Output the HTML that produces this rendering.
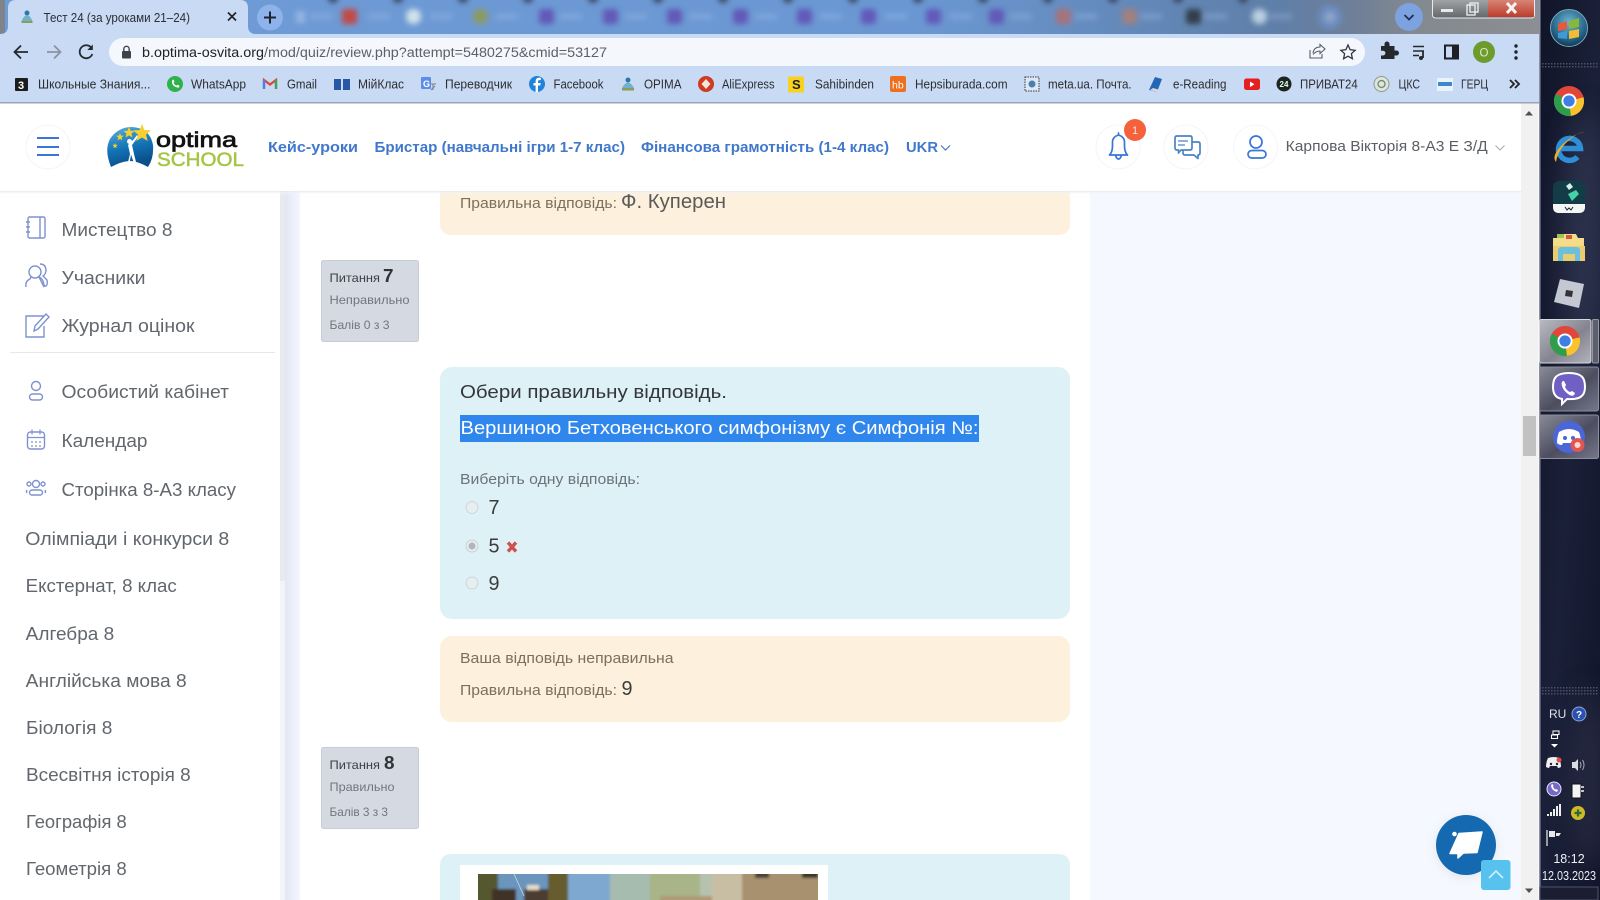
<!DOCTYPE html>
<html lang="uk">
<head>
<meta charset="utf-8">
<title>Тест 24</title>
<style>
html,body{margin:0;padding:0;background:#fff;width:1600px;height:900px;overflow:hidden}
svg{display:block}
text{font-family:"Liberation Sans","DejaVu Sans",sans-serif}
.sb{font-size:18px;fill:#62676d}
.bm{font-size:12.5px;fill:#2c2e32}
.nav{font-size:15px;font-weight:700;fill:#4078cb}
.q{font-size:12px;fill:#72767c}
.qt{font-size:12px;fill:#3c4046}
.qn{font-size:18px;font-weight:700;fill:#30343a}
.m{font-size:18px;fill:#33363a}
.s{font-size:15px;fill:#6c7478}
.f{font-size:15px;fill:#7a715c}
.a{font-size:20px;fill:#3c3c3c}
.ico{fill:none;stroke:#7f92d0;stroke-width:1.4}
.hd{fill:none;stroke:#3a76d6;stroke-width:1.7;stroke-linecap:round;stroke-linejoin:round}
</style>
</head>
<body>
<svg width="1600" height="900" viewBox="0 0 1600 900" xmlns="http://www.w3.org/2000/svg">
<defs>
<filter id="bl" x="-5%" y="-50%" width="110%" height="200%"><feGaussianBlur stdDeviation="3"/></filter>
<filter id="bl2" x="-5%" y="-20%" width="110%" height="140%"><feGaussianBlur stdDeviation="1.2"/></filter>
<filter id="sh" x="-30%" y="-30%" width="160%" height="160%"><feGaussianBlur stdDeviation="5"/></filter>
<filter id="bl3" x="-50%" y="-50%" width="200%" height="200%"><feGaussianBlur stdDeviation="14"/></filter>
<clipPath id="pc"><rect x="478" y="874" width="340" height="26"/></clipPath>
<pattern id="dots" width="3" height="3" patternUnits="userSpaceOnUse"><rect width="1.5" height="1.5" fill="#4a5068"/></pattern>
<linearGradient id="strip" x1="0" x2="1" y1="0" y2="0">
<stop offset="0" stop-color="#6f9bd6"/><stop offset=".6" stop-color="#6a97d2"/><stop offset=".83" stop-color="#5f7fa8"/><stop offset=".88" stop-color="#6f7f98"/><stop offset=".92" stop-color="#84898f"/><stop offset="1" stop-color="#8b8f93"/>
</linearGradient>
<linearGradient id="hsh" x1="0" x2="0" y1="0" y2="1"><stop offset="0" stop-color="#e6e8ee"/><stop offset="1" stop-color="#ffffff" stop-opacity="0"/></linearGradient>
<linearGradient id="left" x1="0" x2="1" y1="0" y2="0"><stop offset="0" stop-color="#e3e6f5"/><stop offset="1" stop-color="#f4f6fd"/></linearGradient>
<linearGradient id="task" x1="0" x2="1" y1="0" y2="1"><stop offset="0" stop-color="#111427"/><stop offset=".5" stop-color="#1a2038"/><stop offset="1" stop-color="#10142a"/></linearGradient>
<linearGradient id="cell" x1="0" x2="1" y1="0" y2="1"><stop offset="0" stop-color="#b9bac2"/><stop offset=".55" stop-color="#83848f"/><stop offset="1" stop-color="#b2b3ba"/></linearGradient>
<linearGradient id="cell2" x1="0" x2="1" y1="0" y2="1"><stop offset="0" stop-color="#8a8b98"/><stop offset=".55" stop-color="#4c4e60"/><stop offset="1" stop-color="#75768a"/></linearGradient>
<linearGradient id="close" x1="0" x2="0" y1="0" y2="1"><stop offset="0" stop-color="#d9887a"/><stop offset="1" stop-color="#bb3d2d"/></linearGradient>
<linearGradient id="win" x1="0" x2="0" y1="0" y2="1"><stop offset="0" stop-color="#a7a9ab"/><stop offset="1" stop-color="#63676b"/></linearGradient>
<radialGradient id="orb" cx=".5" cy=".35" r=".7"><stop offset="0" stop-color="#6db6d4"/><stop offset=".7" stop-color="#215e82"/><stop offset="1" stop-color="#0b2a40"/></radialGradient>
<linearGradient id="lg" x1="0" x2=".3" y1="0" y2="1"><stop offset="0" stop-color="#5ab0e2"/><stop offset=".6" stop-color="#1272b4"/><stop offset="1" stop-color="#0a4f8c"/></linearGradient>
<symbol id="chr" viewBox="-17 -17 34 34" overflow="visible">
<circle r="16" fill="#e0463a"/>
<path d="M0 0L15.5 -4A16 16 0 0 1 2 15.9Z" fill="#f8c32c"/>
<path d="M0 0L2 15.9A16 16 0 0 1 -14 -7.7Z" fill="#2f9e4c"/>
<circle r="8" fill="#fff"/><circle r="6" fill="#3f7fe4"/>
</symbol>
</defs>

<!-- page -->
<rect width="1600" height="900" fill="#fff"/>
<!-- tab strip -->
<rect width="1539" height="34" fill="url(#strip)"/>
<g filter="url(#bl)">
<rect x="296" y="11" width="9" height="12" fill="#a7c1e8" opacity=".7"/>
<rect x="342" y="9" width="15" height="15" rx="2" fill="#c24a45"/>
<rect x="406" y="9" width="15" height="15" rx="7" fill="#d0e2ea"/>
<rect x="473" y="9" width="15" height="15" rx="7" fill="#8d9a5e"/>
<rect x="539" y="9" width="15" height="15" rx="3" fill="#6258b8"/>
<rect x="603" y="9" width="15" height="15" rx="3" fill="#6258b8"/>
<rect x="667" y="9" width="15" height="15" rx="3" fill="#6258b8"/>
<rect x="733" y="9" width="15" height="15" rx="3" fill="#6258b8"/>
<rect x="797" y="9" width="15" height="15" rx="3" fill="#6258b8"/>
<rect x="861" y="9" width="15" height="15" rx="3" fill="#6258b8"/>
<rect x="926" y="9" width="15" height="15" rx="3" fill="#6258b8"/>
<rect x="989" y="9" width="15" height="15" rx="3" fill="#6258b8"/>
<rect x="1056" y="9" width="15" height="15" rx="3" fill="#a8727a"/>
<rect x="1122" y="9" width="15" height="15" rx="3" fill="#a3807e"/>
<rect x="1186" y="9" width="15" height="15" rx="3" fill="#303c4a"/>
<rect x="1252" y="9" width="15" height="15" rx="7" fill="#b9cfe0"/>
<circle cx="1330" cy="17" r="12" fill="#6c8cc0"/><circle cx="1330" cy="17" r="5" fill="#94a8c8"/>
<g fill="#39445e">
<circle cx="333" cy="-2" r="5"/><circle cx="398" cy="-2" r="5"/><circle cx="463" cy="-2" r="5"/><circle cx="528" cy="-2" r="5"/><circle cx="593" cy="-2" r="5"/><circle cx="658" cy="-2" r="5"/><circle cx="723" cy="-2" r="5"/><circle cx="788" cy="-2" r="5"/><circle cx="853" cy="-2" r="5"/><circle cx="918" cy="-2" r="5"/><circle cx="983" cy="-2" r="5"/><circle cx="1048" cy="-2" r="5"/><circle cx="1113" cy="-2" r="5"/><circle cx="1178" cy="-2" r="5"/><circle cx="1243" cy="-2" r="5"/>
</g>
<g fill="#a2bde8" opacity=".4">
<rect x="310" y="14" width="22" height="5"/><rect x="368" y="14" width="22" height="5"/><rect x="430" y="14" width="22" height="5"/><rect x="496" y="14" width="22" height="5"/><rect x="560" y="14" width="22" height="5"/><rect x="625" y="14" width="22" height="5"/><rect x="690" y="14" width="22" height="5"/><rect x="755" y="14" width="22" height="5"/><rect x="820" y="14" width="22" height="5"/><rect x="885" y="14" width="22" height="5"/><rect x="950" y="14" width="22" height="5"/><rect x="1010" y="14" width="22" height="5"/><rect x="1075" y="14" width="22" height="5"/><rect x="1140" y="14" width="22" height="5"/><rect x="1205" y="14" width="22" height="5"/><rect x="1270" y="14" width="22" height="5"/>
</g>
</g>
<rect x="0" y="0" width="5" height="34" fill="#80838a"/>
<!-- active tab -->
<path d="M0 34Q8 34 8 26V8Q8 0 16 0H240Q248 0 248 8V26Q248 34 256 34Z" fill="#c9daf4"/>
<g>
<circle cx="27" cy="13" r="2.500" fill="#2d78a8"/><path d="M21.500 21Q27 9 32.500 21Z" fill="#72b1cc"/><rect x="21.500" y="21" width="11" height="2" fill="#8a9e55"/>
<text x="43.500" y="22" font-size="12.500" fill="#2c2e32" textLength="146.500" lengthAdjust="spacingAndGlyphs">Тест 24 (за уроками 21–24)</text>
<path d="M228 12.500l8 8M236 12.500l-8 8" stroke="#222" stroke-width="1.700"/>
<circle cx="270" cy="17.500" r="13" fill="#8eb2ea"/>
<path d="M264 17.500h12M270 11.500v12" stroke="#1d2430" stroke-width="2"/>
</g>
<circle cx="1409" cy="17" r="14" fill="#7ca3e0"/>
<path d="M1404.500 15l4.500 4.500 4.500-4.500" fill="none" stroke="#1d2f55" stroke-width="1.800"/>
<!-- window controls -->
<g>
<rect x="1432.500" y="-2" width="102" height="20" rx="3" fill="url(#win)" stroke="#e8eaec" stroke-width="1"/>
<rect x="1488" y="-1" width="46" height="18" fill="url(#close)"/>
<rect x="1441" y="9" width="12" height="3" fill="#e8e8e8"/>
<rect x="1467" y="5" width="8" height="10" fill="none" stroke="#f0f0f0" stroke-width="1.300"/>
<rect x="1470" y="3" width="8" height="9" fill="none" stroke="#f0f0f0" stroke-width="1.300"/>
<path d="M1507 3l9 10M1516 3l-9 10" stroke="#f4f4f4" stroke-width="3"/>
</g>
<!-- toolbar -->
<rect y="34" width="1539" height="68" fill="#c9daf4"/>
<rect y="102" width="1539" height="1.500" fill="#9aa5b5"/>
<rect x="109" y="38" width="1256" height="28" rx="14" fill="#f4f7fc"/>
<path d="M28 52H15M21 45.500l-6.500 6.500 6.500 6.500" fill="none" stroke="#25282c" stroke-width="1.800"/>
<path d="M47 52H60M54 45.500l6.500 6.500-6.500 6.500" fill="none" stroke="#8a93a1" stroke-width="1.800"/>
<path d="M91.500 48a6.500 6.500 0 1 0 .8 6" fill="none" stroke="#25282c" stroke-width="1.800"/><path d="M92.800 44.500v5.500h-5.500z" fill="#25282c"/>
<rect x="122" y="51" width="9" height="7.500" rx="1" fill="#3f4248"/><path d="M123.800 51v-2a2.700 2.700 0 0 1 5.400 0v2" fill="none" stroke="#3f4248" stroke-width="1.400"/>
<text x="142" y="57" font-size="13.500" fill="#202328" textLength="122" lengthAdjust="spacingAndGlyphs">b.optima-osvita.org</text>
<text x="264" y="57" font-size="13.500" fill="#5d6066" textLength="343" lengthAdjust="spacingAndGlyphs">/mod/quiz/review.php?attempt=5480275&amp;cmid=53127</text>
<path d="M1310 50v8h12v-4M1313 53q1-6 7-6v-2.500l5 4.500-5 4.500v-2.500q-4 0-7 3.500" fill="none" stroke="#5a5e66" stroke-width="1.100"/>
<path d="M1348 45l2.100 4.700 5 .6-3.700 3.400 1 5-4.400-2.500-4.400 2.500 1-5-3.700-3.400 5-.6z" fill="none" stroke="#33373c" stroke-width="1.300"/>
<path d="M1381 50h3.500v-2a2.500 2.500 0 0 1 5 0v2h5v4.500h2a2.500 2.500 0 0 1 0 5h-2v3.500h-13.500v-3.500h2a2.300 2.300 0 0 0 0-4.800h-2z" fill="#25282c" transform="translate(0 -4)"/>
<path d="M1413 46.500h11M1413 51h11M1413 55.500h6" stroke="#25282c" stroke-width="1.600"/><path d="M1423 51v7" stroke="#25282c" stroke-width="1.800"/><circle cx="1421" cy="58" r="2" fill="#25282c"/>
<rect x="1445" y="45.500" width="13" height="13" fill="none" stroke="#1c1f24" stroke-width="2"/><rect x="1452" y="45.500" width="6" height="13" fill="#1c1f24"/>
<circle cx="1484" cy="52" r="11" fill="#6d9b2e"/>
<text x="1484" y="56.500" text-anchor="middle" font-size="11.500" fill="#dcebc0">O</text>
<g fill="#222"><circle cx="1516" cy="46" r="1.700"/><circle cx="1516" cy="52" r="1.700"/><circle cx="1516" cy="58" r="1.700"/></g>

<!-- bookmarks -->
<rect x="15" y="78" width="13" height="13" rx="1" fill="#1c1c1c"/><text x="18" y="89" font-size="11" font-weight="700" fill="#fff">3</text>
<text class="bm" x="38" y="88.500" textLength="112.500" lengthAdjust="spacingAndGlyphs">Школьные Знания...</text>
<circle cx="175" cy="84" r="8" fill="#2fb24c"/><path d="M172 80.500q-.5 3.500 2 5.500t5 1.500l.5-1.800-2.200-1-1 1q-2-1-2.800-3l1-1-1-2.200z" fill="#fff"/>
<text class="bm" x="191" y="88.500" textLength="55" lengthAdjust="spacingAndGlyphs">WhatsApp</text>
<path d="M264 89V80l6 4.500 6-4.500v9" fill="none" stroke="#d84a3c" stroke-width="2.300"/><path d="M264 89V80" stroke="#4a80e8" stroke-width="2.300"/><path d="M276 89V80" stroke="#3ba55c" stroke-width="2.300"/>
<text class="bm" x="287" y="88.500" textLength="30" lengthAdjust="spacingAndGlyphs">Gmail</text>
<path d="M334 79h7v11h-7zM343 79h7v11h-7z" fill="#2758a8"/>
<text class="bm" x="358" y="88.500" textLength="46" lengthAdjust="spacingAndGlyphs">МійКлас</text>
<rect x="421" y="77" width="10" height="12" rx="1" fill="#5a8ee8"/><text x="423" y="87" font-size="9" font-weight="700" fill="#fff">G</text><path d="M430 84h6M433 84v6M431 90l4-4" stroke="#7a7f88" stroke-width="1"/>
<text class="bm" x="445" y="88.500" textLength="67" lengthAdjust="spacingAndGlyphs">Переводчик</text>
<circle cx="537" cy="84" r="8" fill="#1f83d8"/><path d="M538 92v-6.500h2.300l.4-2.500h-2.700v-1.500q0-1.400 1.500-1.400h1.300v-2.300q-4.800-1-5.200 3.200v2h-2.100v2.500h2.100v6.500z" fill="#fff"/>
<text class="bm" x="553.500" y="88.500" textLength="50" lengthAdjust="spacingAndGlyphs">Facebook</text>
<circle cx="628" cy="80" r="2.500" fill="#2d78a8"/><path d="M622 88q6-11 12 0z" fill="#72b1cc"/><rect x="622" y="88" width="12" height="2.500" fill="#8a9e55"/>
<text class="bm" x="644" y="88.500" textLength="37.500" lengthAdjust="spacingAndGlyphs">OPIMA</text>
<circle cx="706" cy="84" r="8" fill="#cf3b22"/><path d="M706 79l4.500 5-4.500 5-4.500-5z" fill="#f6e6d8"/>
<text class="bm" x="722" y="88.500" textLength="52.500" lengthAdjust="spacingAndGlyphs">AliExpress</text>
<rect x="788" y="76.500" width="16" height="16" rx="1" fill="#f7d21e"/><text x="792" y="89" font-size="13" font-weight="700" fill="#222">S</text>
<text class="bm" x="815" y="88.500" textLength="59" lengthAdjust="spacingAndGlyphs">Sahibinden</text>
<rect x="890" y="76" width="16" height="16" rx="2" fill="#ee6f1e"/><text x="892" y="88.500" font-size="10.500" fill="#fff">hb</text>
<text class="bm" x="915" y="88.500" textLength="92.600" lengthAdjust="spacingAndGlyphs">Hepsiburada.com</text>
<rect x="1025" y="77" width="14" height="14" fill="#dfe7f0" stroke="#2b3a4a" stroke-dasharray="1.500 1"/><circle cx="1032" cy="84" r="3.500" fill="#4a7fb0"/>
<text class="bm" x="1048" y="88.500" textLength="83.600" lengthAdjust="spacingAndGlyphs">meta.ua. Почта.</text>
<path d="M1149 90l6-13 7 2-5 13z" fill="#2466b8"/><path d="M1150 90l7 2 3-2-7-2z" fill="#d8d8d8"/>
<text class="bm" x="1173" y="88.500" textLength="53.500" lengthAdjust="spacingAndGlyphs">e-Reading</text>
<rect x="1244" y="78.500" width="16" height="11.500" rx="2.500" fill="#e51f1f"/><path d="M1250 81.500l4.500 2.800-4.500 2.800z" fill="#fff"/>
<circle cx="1284" cy="84" r="7.500" fill="#1c2420"/><text x="1284" y="87" text-anchor="middle" font-size="8" font-weight="700" fill="#dfe">24</text>
<text class="bm" x="1300" y="88.500" textLength="57.700" lengthAdjust="spacingAndGlyphs">ПРИВАТ24</text>
<circle cx="1381.500" cy="84" r="7.500" fill="#dfe5dc" stroke="#8a9a8c"/><circle cx="1381.500" cy="84" r="3.500" fill="none" stroke="#6a8a70" stroke-width="1.300"/>
<text class="bm" x="1398.500" y="88.500" textLength="21.500" lengthAdjust="spacingAndGlyphs">ЦКС</text>
<rect x="1437" y="78" width="16" height="13" fill="#eaf2fa"/><rect x="1438" y="82" width="14" height="4" fill="#3e88c8"/>
<text class="bm" x="1461" y="88.500" textLength="27" lengthAdjust="spacingAndGlyphs">ГЕРЦ</text>
<path d="M1510 80l4 4-4 4M1515 80l4 4-4 4" fill="none" stroke="#222" stroke-width="1.800"/>

<!-- page background -->
<rect x="0" y="103.500" width="1521" height="796.500" fill="#fff"/>
<rect x="285" y="190" width="15" height="710" fill="url(#left)"/>
<rect x="1090" y="190" width="431" height="710" fill="#f5f8fe"/>
<rect x="280" y="190" width="5" height="391" fill="#e9e9ee"/>
<rect x="280" y="581" width="5" height="319" fill="#f4f4f7"/>
<rect x="1521" y="103.500" width="17.500" height="796.500" fill="#f1f1f1"/>
<rect x="1523" y="416" width="13" height="40" fill="#c1c1c1"/>
<path d="M1525 115.500l4-4.500 4 4.500z" fill="#505050"/>
<path d="M1525 888.500l4 4.500 4-4.500z" fill="#505050"/>

<!-- main content -->
<path d="M440 191H1070V223Q1070 235 1058 235H452Q440 235 440 223Z" fill="#fdf0dc"/>
<text class="f" x="460" y="208" textLength="157" lengthAdjust="spacingAndGlyphs">Правильна відповідь:</text>
<text class="a" x="621" y="208" textLength="105" lengthAdjust="spacingAndGlyphs" style="fill:#5a5a5a">Ф. Куперен</text>

<rect x="321.500" y="260.500" width="97" height="81" rx="2" fill="#d5d9e2" stroke="#c8ccd6"/>
<text class="qt" x="329.500" y="282" textLength="50.500" lengthAdjust="spacingAndGlyphs">Питання</text>
<text class="qn" x="383" y="282" textLength="10.500" lengthAdjust="spacingAndGlyphs">7</text>
<text class="q" x="329.500" y="304" textLength="80" lengthAdjust="spacingAndGlyphs">Неправильно</text>
<text class="q" x="329.500" y="329" textLength="60" lengthAdjust="spacingAndGlyphs">Балів 0 з 3</text>

<rect x="440" y="367" width="630" height="252" rx="12" fill="#def1f7"/>
<text class="m" x="460" y="398" textLength="267" lengthAdjust="spacingAndGlyphs">Обери правильну відповідь.</text>
<rect x="460" y="415" width="519" height="27" fill="#2f86ec"/>
<text class="m" x="460.500" y="434" style="fill:#fff" textLength="518" lengthAdjust="spacingAndGlyphs">Вершиною Бетховенського симфонізму є Симфонія №:</text>
<text class="s" x="460" y="484" textLength="180" lengthAdjust="spacingAndGlyphs">Виберіть одну відповідь:</text>
<circle cx="472" cy="507.500" r="6" fill="#e6eef1" stroke="#d0d5d8"/>
<text class="a" x="488.500" y="514" textLength="11" lengthAdjust="spacingAndGlyphs">7</text>
<circle cx="472" cy="546" r="6" fill="#e6eef1" stroke="#ccd0d4"/><circle cx="472" cy="546" r="3.500" fill="#b2b6ba"/>
<text class="a" x="488.500" y="552.500" textLength="11" lengthAdjust="spacingAndGlyphs">5</text>
<path d="M508 542.500l8 9M516 542.500l-8 9" stroke="#d0504a" stroke-width="3.400"/>
<circle cx="472" cy="583" r="6" fill="#e6eef1" stroke="#d0d5d8"/>
<text class="a" x="488.500" y="590" textLength="11" lengthAdjust="spacingAndGlyphs">9</text>

<rect x="440" y="636" width="630" height="86" rx="12" fill="#fdf0dc"/>
<text class="f" x="460" y="663" textLength="213.500" lengthAdjust="spacingAndGlyphs">Ваша відповідь неправильна</text>
<text class="f" x="460" y="695" textLength="157" lengthAdjust="spacingAndGlyphs">Правильна відповідь:</text>
<text class="a" x="621.500" y="695" textLength="11" lengthAdjust="spacingAndGlyphs">9</text>

<rect x="321.500" y="747.500" width="97" height="81" rx="2" fill="#d5d9e2" stroke="#c8ccd6"/>
<text class="qt" x="329.500" y="769" textLength="50.500" lengthAdjust="spacingAndGlyphs">Питання</text>
<text class="qn" x="384" y="769" textLength="10.500" lengthAdjust="spacingAndGlyphs">8</text>
<text class="q" x="329.500" y="791" textLength="65" lengthAdjust="spacingAndGlyphs">Правильно</text>
<text class="q" x="329.500" y="816" textLength="58.500" lengthAdjust="spacingAndGlyphs">Балів 3 з 3</text>

<path d="M440 900V866Q440 854 452 854H1058Q1070 854 1070 866V900Z" fill="#def1f7"/>
<rect x="460" y="865" width="368" height="35" fill="#fff"/>
<rect x="478" y="874" width="340" height="26" fill="#9fb9cc"/>
<g clip-path="url(#pc)"><g filter="url(#bl2)">
<rect x="470" y="866" width="28" height="40" fill="#55592e"/>
<rect x="498" y="866" width="50" height="40" fill="#6b95bc"/>
<rect x="492" y="889" width="24" height="14" fill="#3f3328"/>
<rect x="524" y="889" width="24" height="14" fill="#4c3e30"/>
<rect x="527" y="885" width="12" height="5" fill="#e6dcc8"/>
<rect x="548" y="866" width="20" height="40" fill="#665c2e"/>
<rect x="568" y="866" width="54" height="40" fill="#7fa8d0"/>
<rect x="610" y="866" width="60" height="40" fill="#a6bcae"/>
<rect x="650" y="870" width="50" height="36" fill="#a9b488"/>
<rect x="700" y="866" width="22" height="40" fill="#b6c2b0"/>
<rect x="660" y="896" width="70" height="8" fill="#b09a78"/>
<rect x="712" y="866" width="30" height="40" fill="#c8bea4"/>
<rect x="742" y="866" width="80" height="40" fill="#a8916e"/>
<rect x="755" y="870" width="14" height="8" fill="#4a4238"/>
<rect x="802" y="870" width="16" height="8" fill="#3a342c"/>
</g>
<path d="M514 874l10 22" stroke="#cfd8dc" stroke-width=".8"/>
</g>

<!-- sidebar -->
<rect x="0" y="191" width="280" height="709" fill="#fff"/>
<rect x="10" y="352" width="265" height="1" fill="#e8e8ec"/>
<g class="ico">
<rect x="28" y="217" width="17" height="21" rx="1.500"/><path d="M40 217v21M26 222h4M26 227h4M26 232h4"/>
<circle cx="35" cy="272" r="6"/><path d="M26 287q-1-6 4-8l1-2m8 0q5 2 5 10zM40 264q6 0 6 7-1 4-3 5l4 4q1 4-1 6h-2"/>
<path d="M44 316h-18v21h18v-11M34 331l1-5 11-12 3 3-11 12z"/>
<circle cx="36" cy="386" r="4.500"/><rect x="29.500" y="394" width="13" height="6" rx="3"/>
<rect x="27.500" y="432" width="17" height="17" rx="3"/><path d="M27.500 437.500h17M32 429.500v5M40 429.500v5M31 442h2M35 442h2M39 442h2M31 446h2M35 446h2M39 446h2" stroke-width="1.200"/>
<circle cx="36" cy="484" r="3.500"/><rect x="29.500" y="490" width="13" height="5" rx="2.500"/><circle cx="29" cy="484" r="2"/><circle cx="43" cy="484" r="2"/><path d="M27 490q-1 2 0 3M45 490q1 2 0 3"/>
</g>
<text class="sb" x="61.500" y="236" textLength="111" lengthAdjust="spacingAndGlyphs">Мистецтво 8</text>
<text class="sb" x="61.500" y="284" textLength="84" lengthAdjust="spacingAndGlyphs">Учасники</text>
<text class="sb" x="61.500" y="332" textLength="133" lengthAdjust="spacingAndGlyphs">Журнал оцінок</text>
<text class="sb" x="61.500" y="398" textLength="167.500" lengthAdjust="spacingAndGlyphs">Особистий кабінет</text>
<text class="sb" x="61.500" y="447" textLength="86" lengthAdjust="spacingAndGlyphs">Календар</text>
<text class="sb" x="61.500" y="496" textLength="174.500" lengthAdjust="spacingAndGlyphs">Сторінка 8-А3 класу</text>
<text class="sb" x="25.300" y="545" textLength="204" lengthAdjust="spacingAndGlyphs">Олімпіади і конкурси 8</text>
<text class="sb" x="25.700" y="592" textLength="151" lengthAdjust="spacingAndGlyphs">Екстернат, 8 клас</text>
<text class="sb" x="25.700" y="640" textLength="88.500" lengthAdjust="spacingAndGlyphs">Алгебра 8</text>
<text class="sb" x="25.700" y="687" textLength="161" lengthAdjust="spacingAndGlyphs">Англійська мова 8</text>
<text class="sb" x="26" y="734" textLength="86.300" lengthAdjust="spacingAndGlyphs">Біологія 8</text>
<text class="sb" x="26" y="781" textLength="164.700" lengthAdjust="spacingAndGlyphs">Всесвітня історія 8</text>
<text class="sb" x="26" y="828" textLength="100.700" lengthAdjust="spacingAndGlyphs">Географія 8</text>
<text class="sb" x="26" y="875" textLength="100.700" lengthAdjust="spacingAndGlyphs">Геометрія 8</text>

<!-- header -->
<rect x="0" y="103.500" width="1521" height="87.500" fill="#fff"/>
<rect x="0" y="191" width="1521" height="4" fill="url(#hsh)"/>
<g fill="#fff" stroke="#f4f5f8">
<circle cx="48" cy="147" r="22"/><circle cx="1118" cy="147" r="22"/><circle cx="1186" cy="147" r="22"/><circle cx="1255.500" cy="147" r="22"/>
</g>
<path d="M37 138h22M37 147h22M37 155h22" stroke="#3a76d6" stroke-width="2"/>
<!-- logo -->
<path d="M111 167Q104 150 110 139Q118 127 132 127Q150 128 153 145Q154 158 148 167Q137 161 130 161Q122 161 111 167Z" fill="url(#lg)"/>
<path d="M127 166l3-12-2-9 6-6 3-4 1 2-6 8 2 9 3 12-2 .5-4-12-2 12z" fill="#fff"/>
<circle cx="129.500" cy="141.500" r="2.500" fill="#fff"/>
<g fill="#f6cf30">
<path d="M142 124l2.400 6 6.600.4-5 4.200 1.700 6.400-5.700-3.500-5.600 3.500 1.600-6.400-5-4.200 6.600-.4z"/>
<path d="M129 127l1.500 3.700 4 .3-3 2.600 1 4-3.500-2.200-3.500 2.200 1-4-3-2.600 4-.3z"/>
<path d="M120 133l1 2.600 2.800.2-2.200 1.800.7 2.800-2.300-1.500-2.400 1.500.7-2.800-2.200-1.800 2.800-.2z"/>
<path d="M115 143l.7 1.800 2 .1-1.500 1.300.5 1.900-1.700-1-1.600 1 .5-1.900-1.500-1.300 2-.1z"/>
</g>
<text x="156" y="147" font-size="21" fill="#121212" stroke="#121212" stroke-width=".7" textLength="81" lengthAdjust="spacingAndGlyphs">optima</text>
<text x="157" y="166" font-size="19.500" fill="#a4c644" stroke="#a4c644" stroke-width=".5" textLength="87" lengthAdjust="spacingAndGlyphs">SCHOOL</text>

<text class="nav" x="268" y="152" textLength="90" lengthAdjust="spacingAndGlyphs">Кейс-уроки</text>
<text class="nav" x="374.500" y="152" textLength="250.500" lengthAdjust="spacingAndGlyphs">Бристар (навчальні ігри 1-7 клас)</text>
<text class="nav" x="641" y="152" textLength="248" lengthAdjust="spacingAndGlyphs">Фінансова грамотність (1-4 клас)</text>
<text class="nav" x="906" y="152" textLength="32" lengthAdjust="spacingAndGlyphs">UKR</text>
<path d="M941 145.500l4.500 4.500 4.500-4.500" fill="none" stroke="#4078cb" stroke-width="1.200"/>

<!-- bell -->
<path class="hd" d="M1109.500 155q3-3 3-9v-4q0-5 6-7 6 2 6 7v4q0 6 3 9zM1118.500 135v-2M1115.500 155q1 4 3 4t3-4"/>
<circle cx="1135" cy="130" r="11" fill="#f4613b"/>
<text x="1135" y="134" text-anchor="middle" font-size="11" fill="#fde2d8">1</text>
<!-- chat -->
<g fill="none" stroke="#4a84c4" stroke-width="1.700" stroke-linejoin="round">
<path d="M1177 136h13q2 0 2 2v10q0 2-2 2h-9l-2.500 3v-3h-1.500q-2 0-2-2v-10q0-2 2-2z"/>
<path d="M1192 142h6q2 0 2 2v9q0 2-2 2v3.500l-4-3.500h-9q-2 0-2-2v-3"/>
<path d="M1178 141h10M1178 145h7" stroke-width="1.300"/>
</g>
<!-- user -->
<circle cx="1256" cy="142" r="6" class="hd"/><rect x="1248" y="150.500" width="18" height="7.500" rx="3.750" class="hd"/>
<text x="1285.700" y="151" font-size="15" fill="#5a5f65" textLength="202" lengthAdjust="spacingAndGlyphs">Карпова Вікторія 8-А3 Е З/Д</text>
<path d="M1495.500 145.500l4.500 4.500 4.500-4.500" fill="none" stroke="#aab2bb" stroke-width="1.200"/>

<!-- floating -->
<circle cx="1466" cy="847" r="30" fill="#aab" opacity=".25" filter="url(#sh)"/>
<circle cx="1466" cy="845" r="30" fill="#1569b0"/>
<path d="M1459 833.500L1482 832L1477 852.500L1463.500 853L1458 858L1458 853.500L1450 853.500Z" fill="#fff" stroke="#fff" stroke-width="1.500" stroke-linejoin="round"/>
<circle cx="1454.500" cy="834" r="2.300" fill="#fff"/>
<rect x="1481" y="860" width="29.500" height="30" rx="3" fill="#58c2ef"/>
<path d="M1489 878l7-7 7 7" fill="none" stroke="#cfeefb" stroke-width="1.600"/>

<!-- taskbar -->
<rect x="1539" y="0" width="61" height="900" fill="url(#task)"/>
<svg x="1539" y="0" width="61" height="900" viewBox="1539 0 61 900">
<ellipse cx="1585" cy="240" rx="24" ry="130" fill="#3b3f5c" opacity=".55" filter="url(#bl3)"/>
<ellipse cx="1590" cy="780" rx="22" ry="90" fill="#343850" opacity=".5" filter="url(#bl3)"/>
</svg>
<rect x="1539" y="0" width="1.500" height="900" fill="#8d92a8"/>
<rect x="1542" y="62" width="56" height="7" fill="url(#dots)"/>
<rect x="1542" y="687" width="56" height="8" fill="url(#dots)"/>
<circle cx="1569" cy="28" r="18.500" fill="url(#orb)" stroke="#7fa6b8"/>
<path d="M1558 24l9-3v8l-9 2z" fill="#e8583a"/><path d="M1569 21l10-3v9l-10 2z" fill="#86b83a"/><path d="M1558 33l9-2v8l-9-1z" fill="#3f9ad8"/><path d="M1569 31l10-2v8l-10 2z" fill="#f2bc34"/>
<use href="#chr" x="1553" y="85" width="32" height="32"/>
<path d="M1558 148.500h22.500a11 11 0 1 0-3 8.500" fill="none" stroke="#2e8fd8" stroke-width="5.500"/>
<path d="M1556 162q-5-6 6-17t22-13q-6 0-16 9t-12 21z" fill="#e8b030"/>
<rect x="1553" y="181" width="32" height="32" rx="6" fill="#123c46"/>
<path d="M1553 204h32v3q0 6-6 6h-20q-6 0-6-6z" fill="#f4f6f6"/>
<path d="M1566 186l4-3 3 4-4 3z" fill="#d6f0e6"/><path d="M1568 194l8-4 3 4-7 7z" fill="#45d2a8"/>
<path d="M1565 207l2 3 2-2 2 2 2-3" stroke="#123" fill="none"/>
<path d="M1553 238h9l2-4h12l2 4h6v23h-31z" fill="#f4dc8a"/><rect x="1557" y="234" width="7" height="4" fill="#9dc44c"/><rect x="1566" y="235" width="6" height="4" fill="#d05a40"/>
<rect x="1553" y="246" width="32" height="15" fill="#e8cd72"/>
<path d="M1558 261v-10q0-4 4-4h14q4 0 4 4v10h-5v-7h-12v7z" fill="#6cc0dc"/>
<path d="M1560 279l24 5-5 24-25-6z" fill="#c3c8d2"/><path d="M1566 290l7 1-1 6-7-1z" fill="#333"/>
<rect x="1539.500" y="319.500" width="51.500" height="43.500" rx="2" fill="url(#cell)" stroke="#d8d9de"/>
<rect x="1592.500" y="319.500" width="6" height="43.500" rx="1" fill="#5e5f6e" stroke="#9698a2"/>
<use href="#chr" x="1549" y="325" width="32" height="32"/>
<rect x="1539.500" y="367" width="59" height="44" rx="2" fill="url(#cell2)" stroke="#8d8e99"/>
<path d="M1569 373c-13 0-16 5-16 14 0 7 3 11 9 12v5l5-5c13 1 18-3 18-12 0-9-3-14-16-14z" fill="#7160c4" stroke="#fff" stroke-width="2"/>
<path d="M1563 381q-2 1-1 5t6 8q4 3 6 1l1-2-3-2-2 1q-3-1-5-5l1-2-2-4z" fill="#fff"/>
<rect x="1539.500" y="415" width="59" height="43.500" rx="2" fill="url(#cell2)" stroke="#8d8e99"/>
<circle cx="1569" cy="437" r="16" fill="#4a66d8"/>
<path d="M1559 432q5-3 10-3t10 3q2 5 2 11-2 2-5 2l-1-2h-12l-1 2q-3 0-5-2 0-6 2-11z" fill="#fff"/>
<circle cx="1565" cy="438" r="2" fill="#4a66d8"/><circle cx="1573" cy="438" r="2" fill="#4a66d8"/>
<circle cx="1577.500" cy="445" r="7" fill="#e2564e"/><circle cx="1577.500" cy="445" r="3" fill="#f8d8d4"/>

<!-- tray -->
<text x="1549" y="718" font-size="12" fill="#dfe2ea">RU</text>
<circle cx="1579" cy="714" r="7" fill="#2a50b0" stroke="#8fa3dc"/><text x="1579" y="718" text-anchor="middle" font-size="10" font-weight="700" fill="#fff">?</text>
<rect x="1553" y="731" width="6" height="3.500" fill="none" stroke="#fff"/><rect x="1551.500" y="735" width="6" height="3.500" fill="none" stroke="#fff"/>
<path d="M1551 744h7l-3.500 3.500z" fill="#fff"/>
<path d="M1548 758q6-2 11 0 2 4 2 9-2 1-3 1l-1-2h-7l-1 2q-1 0-3-1 0-5 2-9z" fill="#f0f0f4"/><circle cx="1559" cy="760" r="2.500" fill="#e24a4a"/>
<circle cx="1551" cy="764" r="1.200" fill="#222"/><circle cx="1557" cy="764" r="1.200" fill="#222"/>
<path d="M1572 762h3l3-3v12l-3-3h-3z" fill="#d8dce2"/><path d="M1580 762q2 3 0 6M1582.500 760q3 5 0 10" stroke="#aab" fill="none"/>
<circle cx="1554" cy="789" r="7" fill="#7568c8" stroke="#e8e6f8"/><path d="M1551 785q0 5 6 7l1-2-2-1-1 .5q-1-1-2-3l.5-1-1-1.500z" fill="#fff"/>
<rect x="1572" y="784" width="9" height="14" fill="#f4f4f4" stroke="#111"/><path d="M1581 787h3M1581 791h3" stroke="#f4f4f4" stroke-width="1.500"/>
<path d="M1547 817h2v-2h-2zM1550 817h2v-4h-2zM1553 817h2v-7h-2zM1556 817h2v-10h-2zM1559 817h2v-12h-2z" fill="#eee" transform="translate(0 -1)"/>
<circle cx="1578" cy="813" r="7" fill="#cdb92a"/><path d="M1578 809.500v7M1574.500 813h7" stroke="#2a6a30" stroke-width="2.200"/>
<path d="M1547 830v16" stroke="#eee" stroke-width="1.200"/><path d="M1549 831h6v6h-6zM1556 833h5l-2 3h-3z" fill="#e8e8e8"/>
<text x="1569" y="863" text-anchor="middle" font-size="12.500" fill="#eef0f6">18:12</text>
<text x="1569" y="880" text-anchor="middle" font-size="12.500" fill="#eef0f6" textLength="54" lengthAdjust="spacingAndGlyphs">12.03.2023</text>
<rect x="1540" y="887" width="58" height="13" fill="#1a1e30" stroke="#50546a"/>
</svg>
</body>
</html>
